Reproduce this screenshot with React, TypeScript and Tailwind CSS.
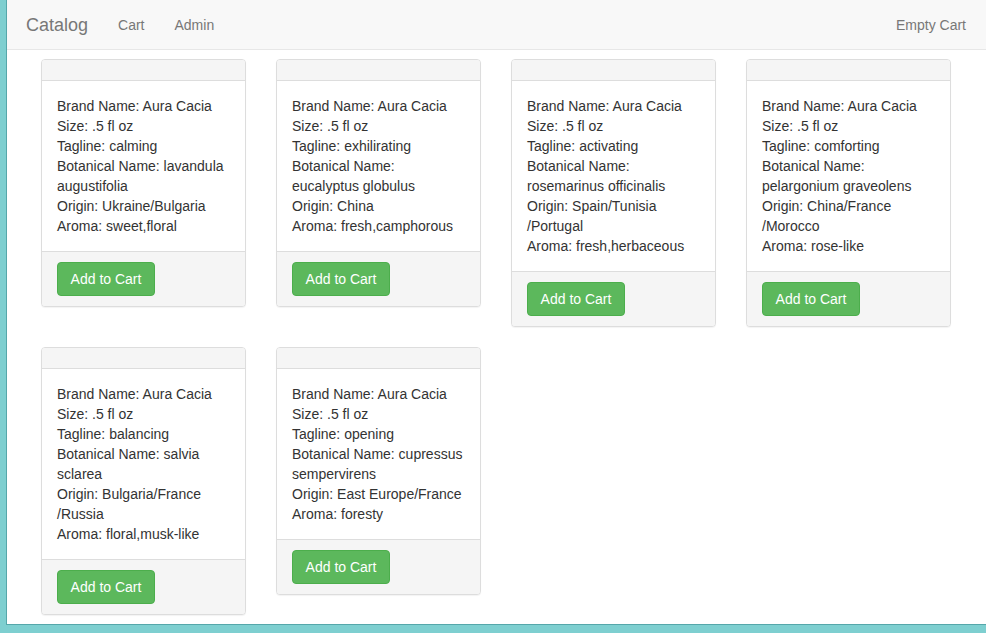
const products = [
  {
    tagline: 'calming',
    botanical: ['Botanical Name: lavandula', 'augustifolia'],
    origin: ['Origin: Ukraine/Bulgaria'],
    aroma: 'sweet,floral',
  },
  {
    tagline: 'exhilirating',
    botanical: ['Botanical Name:', 'eucalyptus globulus'],
    origin: ['Origin: China'],
    aroma: 'fresh,camphorous',
  },
  {
    tagline: 'activating',
    botanical: ['Botanical Name:', 'rosemarinus officinalis'],
    origin: ['Origin: Spain/Tunisia', '/Portugal'],
    aroma: 'fresh,herbaceous',
  },
  {
    tagline: 'comforting',
    botanical: ['Botanical Name:', 'pelargonium graveolens'],
    origin: ['Origin: China/France', '/Morocco'],
    aroma: 'rose-like',
  },
  {
    tagline: 'balancing',
    botanical: ['Botanical Name: salvia', 'sclarea'],
    origin: ['Origin: Bulgaria/France', '/Russia'],
    aroma: 'floral,musk-like',
  },
  {
    tagline: 'opening',
    botanical: ['Botanical Name: cupressus', 'sempervirens'],
    origin: ['Origin: East Europe/France'],
    aroma: 'foresty',
  },
];

function ProductCard({ p }: { p: (typeof products)[number] }) {
  return (
    <div className="border border-[#dddddd] rounded-[4px] bg-white shadow-[0_1px_1px_rgba(0,0,0,0.05)] overflow-hidden">
      <div className="h-[21px] bg-[#f5f5f5] border-b border-[#dddddd]" />
      <div className="p-[15px] whitespace-nowrap">
        <div>Brand Name: Aura Cacia</div>
        <div>Size: .5 fl oz</div>
        <div>Tagline: {p.tagline}</div>
        {p.botanical.map((line) => (
          <div key={line}>{line}</div>
        ))}
        {p.origin.map((line) => (
          <div key={line}>{line}</div>
        ))}
        <div>Aroma: {p.aroma}</div>
      </div>
      <div className="bg-[#f5f5f5] border-t border-[#dddddd] px-[15px] py-[10px]">
        <button className="h-[34px] w-[98px] rounded-[4px] bg-[#5cb85c] border border-[#4cae4c] text-white text-[14px]">
          Add to Cart
        </button>
      </div>
    </div>
  );
}

export default function App() {
  return (
    <div
      className="w-[986px] h-[633px] bg-[#7ecfd0] pl-[6px] pb-[8px] overflow-hidden text-[14px] leading-[20px] text-[#333333]"
      style={{ fontFamily: '"Liberation Sans", Arial, sans-serif' }}
    >
      <div className="h-full bg-white border-l border-b border-[#55a7aa] overflow-hidden">
        {/* Navbar */}
        <nav className="h-[50px] bg-[#f8f8f8] border-b border-[#e7e7e7] flex items-center text-[#777777]">
          <span className="pl-[19px] pr-[15px] text-[18px]">Catalog</span>
          <span className="px-[15px]">Cart</span>
          <span className="px-[15px]">Admin</span>
          <span className="ml-auto pr-[20px]">Empty Cart</span>
        </nav>

        {/* Products */}
        <div className="pt-[9px] pl-[34px] grid grid-cols-[repeat(4,205px)] gap-x-[30px] gap-y-[20px] items-start">
          {products.map((p) => (
            <ProductCard key={p.tagline} p={p} />
          ))}
        </div>
      </div>
    </div>
  );
}
